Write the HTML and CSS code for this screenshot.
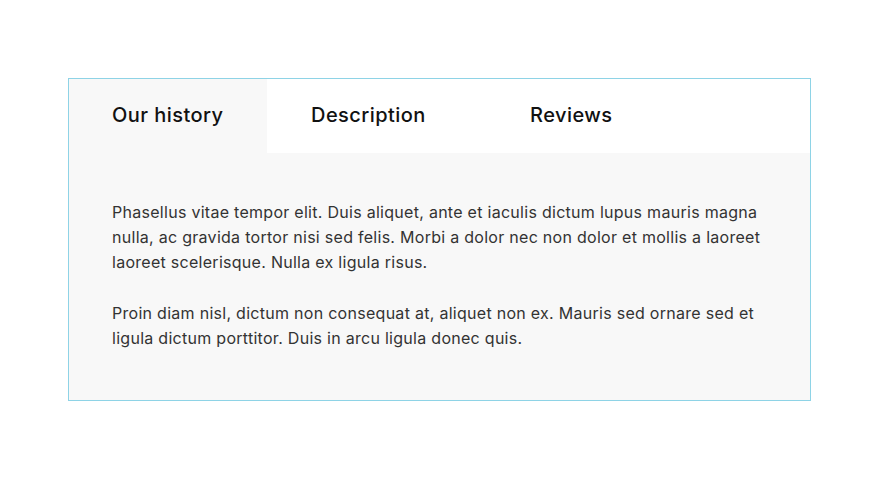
FILE: index.html
```html
<!DOCTYPE html>
<html lang="en">
<head>
<meta charset="utf-8">
<title>Tabs</title>
<link rel="stylesheet" href="styles.css">
</head>
<body>
<div class="page">
  <div class="tabs">
    <div class="tab-list">
      <div class="tab tab-active tab-1">Our history</div>
      <div class="tab tab-2">Description</div>
      <div class="tab tab-3">Reviews</div>
    </div>
    <div class="panel">
      <p>Phasellus vitae tempor elit. Duis aliquet, ante et iaculis dictum lupus mauris magna nulla, ac gravida tortor nisi sed felis. Morbi a dolor nec non dolor et mollis a laoreet laoreet scelerisque. Nulla ex ligula risus.</p>
      <p>Proin diam nisl, dictum non consequat at, aliquet non ex. Mauris sed ornare sed et ligula dictum porttitor. Duis in arcu ligula donec quis.</p>
    </div>
  </div>
</div>
</body>
</html>
```

FILE: styles.css
```css
html, body {
  margin: 0;
  padding: 0;
  background: #ffffff;
}
body {
  font-family: Inter, "DejaVu Sans", sans-serif;
  color: #2b2b2b;
}
.page {
  padding: 78px 71px 0 68px;
}
.tabs {
  border: 1px solid #8ed3e6;
  background: #f8f8f8;
}
.tab-list {
  display: flex;
  background: #ffffff;
}
.tab {
  height: 74px;
  display: flex;
  align-items: center;
  padding-left: 44px;
  padding-bottom: 2px;
  font-size: 20px;
  font-weight: 500;
  letter-spacing: 0.45px;
  color: #111111;
  box-sizing: border-box;
}
.tab-1 { width: 198px; padding-left: 43px; }
.tab-2 { width: 219px; }
.tab-active { background: #f8f8f8; }
.panel {
  padding: 47px 43px 49px 43px;
  font-size: 16px;
  line-height: 25px;
  letter-spacing: 0.28px;
  color: #333333;
}
.panel p {
  margin: 0 0 26px 0;
}
.panel p:last-child {
  margin-bottom: 0;
}
```
